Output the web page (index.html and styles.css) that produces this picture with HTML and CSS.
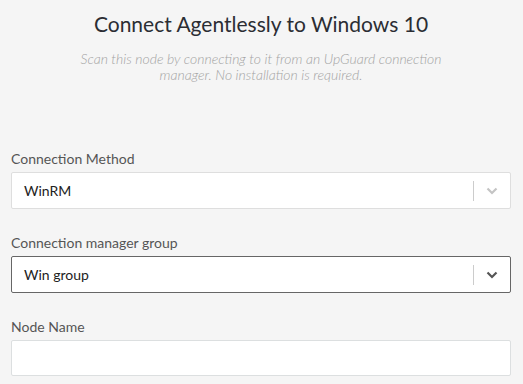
FILE: index.html
```html
<!DOCTYPE html>
<html lang="en">
  <head>
    <meta charset="UTF-8" />
    <title>Connect Agentlessly</title>
    <link rel="stylesheet" href="styles.css">
  </head>
  <body>
    <div class="container">
      <div class="header">
        <h2>Connect Agentlessly to Windows 10</h2>
        <p class="subtitle">
          Scan this node by connecting to it from an UpGuard connection<br />
          manager. No installation is required.
        </p>
      </div>

      <form class="form">
        <div class="field">
          <label>Connection Method</label>
          <div class="select">
            <span class="select-value">WinRM</span>
            <span class="select-sep"></span>
            <span class="select-arrow">
              <svg width="12" height="8" viewBox="0 0 12 8"><polyline points="1.5,1.5 6,6 10.5,1.5" fill="none" stroke="currentColor" stroke-width="2.2" /></svg>
            </span>
          </div>
        </div>

        <div class="field">
          <label>Connection manager group</label>
          <div class="select focused">
            <span class="select-value">Win group</span>
            <span class="select-sep"></span>
            <span class="select-arrow">
              <svg width="12" height="8" viewBox="0 0 12 8"><polyline points="1.5,1.5 6,6 10.5,1.5" fill="none" stroke="currentColor" stroke-width="2.2" /></svg>
            </span>
          </div>
        </div>

        <div class="field">
          <label>Node Name</label>
          <input type="text" class="text-input" />
        </div>
      </form>
    </div>
  </body>
</html>
```

FILE: styles.css
```css
body {
  font-family: "Lato", "Open Sans", sans-serif;
  background: #f5f5f5;
  margin: 0;
  padding: 0 12px 0 11px;
  overflow: hidden;
}

.header {
  text-align: center;
  padding-top: 11px;
}

h2 {
  font-size: 21px;
  font-weight: 400;
  color: #2b2d33;
  margin: 0;
  line-height: 25px;
}

.subtitle {
  font-size: 14px;
  font-style: italic;
  font-weight: 300;
  color: #a3a3a3;
  line-height: 16px;
  margin: 15px 0 0;
}

.form {
  margin-top: 67px;
}

.field {
  margin-bottom: 25px;
}

label {
  display: block;
  font-size: 14px;
  line-height: 18px;
  color: #555;
  margin-bottom: 4px;
}

.select {
  display: flex;
  align-items: center;
  height: 37px;
  box-sizing: border-box;
  background: #fff;
  border: 1px solid #dedede;
  border-radius: 2px;
  padding-left: 12px;
}

.select.focused {
  border-color: #666;
}

.select-value {
  flex: 1;
  font-size: 14px;
  color: #222;
}

.select-sep {
  width: 1px;
  height: 20px;
  background: #ccc;
}

.select-arrow {
  width: 36px;
  display: flex;
  justify-content: center;
  color: #c4c4c4;
}

.select.focused .select-arrow {
  color: #555;
}

.text-input {
  display: block;
  width: 100%;
  height: 36px;
  box-sizing: border-box;
  border: 1px solid #dcdfe0;
  border-radius: 2px;
  background: #fff;
  font-family: inherit;
  font-size: 14px;
  padding: 0 12px;
}
```
